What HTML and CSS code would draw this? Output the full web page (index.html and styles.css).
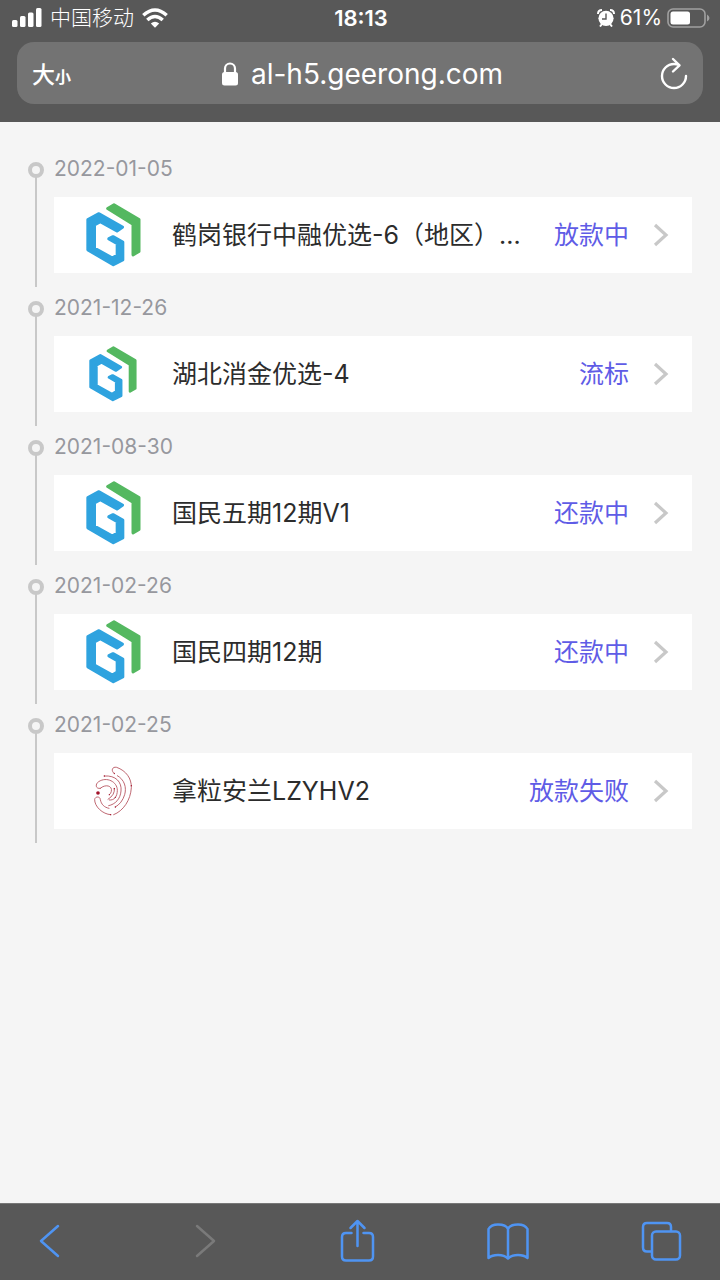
FILE: index.html
```html
<!DOCTYPE html>
<html lang="zh-CN">
<head>
<meta charset="utf-8">
<meta name="viewport" content="width=device-width, initial-scale=1">
<title>al-h5.geerong.com</title>
<link rel="stylesheet" href="styles.css">
</head>
<body>
<svg class="defs" width="0" height="0" aria-hidden="true">
  <symbol id="logo-g" viewBox="257 189 165 191">
    <path fill="#2fa3df" stroke="#2fa3df" stroke-width="10" stroke-linejoin="round" d="M296 221 L366 261 L350 272 L300 244 L282 254 L282 324 L336 354 L351 345 L351 310 L326 296 L338 290 L367 306 L367 359 L339 373 L263 329 L263 239 Z"/>
    <path fill="#54b860" stroke="#54b860" stroke-width="9" stroke-linejoin="round" d="M322 205 L341 194 L416 238 L416 334 L398 344 L398 252 Z"/>
  </symbol>
  <symbol id="chevron" viewBox="0 0 16 26">
    <path d="M2 3 L13 13 L2 23" fill="none" stroke="#c8c8c8" stroke-width="3.2"/>
  </symbol>
</svg>

<header class="browser-top">
  <div class="status">
    <div class="status-side">
      <svg width="30" height="20" viewBox="0 0 30 20" fill="#fff" aria-hidden="true"><rect y="12" width="5.500" height="7" rx="1.500"/><rect x="8" y="8" width="5.500" height="11" rx="1.500"/><rect x="16" y="4.500" width="5.500" height="14.500" rx="1.500"/><rect x="24" y="0" width="5.500" height="19" rx="1.500"/></svg>
      <span class="carrier">中国移动</span>
      <svg width="26" height="20" viewBox="0 0 26 20" aria-hidden="true"><g fill="none" stroke="#fff" stroke-width="3.500"><path d="M1.300 7.300 Q13 -3.300 24.700 7.300"/><path d="M5.300 12 Q13 5 20.700 12"/></g><path fill="#fff" d="M8.800 15.500 Q13 12 17.200 15.500 L13 19.700Z"/></svg>
    </div>
    <time class="clock">18:13</time>
    <div class="status-side status-right">
      <svg width="18" height="18" viewBox="0 0 18 18" aria-hidden="true"><circle cx="9" cy="9.300" r="7.600" fill="#fff"/><path d="M1 5 Q1 1 5 1 M13 1 Q17 1 17 5 M3 17.500 L5 15 M15 17.500 L13 15" fill="none" stroke="#fff" stroke-width="2"/><path d="M9 4.500 V10 H5" fill="none" stroke="#585858" stroke-width="1.400"/></svg>
      <span class="percent">61%</span>
      <svg width="43" height="20" viewBox="0 0 43 20" aria-hidden="true"><rect x="1" y="1" width="37" height="18" rx="5" fill="none" stroke="#a0a0a0" stroke-width="1.600"/><rect x="3.500" y="3.500" width="19.500" height="13" rx="2.500" fill="#fff"/><path d="M40 6.500 Q42.500 8 42.500 10 Q42.500 12 40 13.500Z" fill="#a0a0a0"/></svg>
    </div>
  </div>
  <div class="address">
    <button class="text-size" type="button">大<small>小</small></button>
    <div class="url">
      <svg width="18" height="24" viewBox="0 0 18 24" aria-hidden="true"><rect x="1" y="10" width="16" height="13.500" rx="2.500" fill="#fff"/><path d="M4 11 V6.500 a5 5 0 0 1 10 0 V11" fill="none" stroke="#fff" stroke-width="2.200"/></svg>
      <span>al-h5.geerong.com</span>
    </div>
    <button class="reload" type="button" aria-label="重新加载">
      <svg width="28" height="34" viewBox="0 0 28 34" fill="none" stroke="#fff" stroke-width="2.400" stroke-linecap="round" stroke-linejoin="round" aria-hidden="true"><path d="M26 20 A12 12 0 1 1 14 8 Q17 8 19 9"/><path d="M13 3 L19.500 9.300 L13 15.500"/></svg>
    </button>
  </div>
</header>

<main class="page">
  <ol class="timeline">
    <li class="entry">
      <time class="date">2022-01-05</time>
      <a class="card" href="#"><span class="logo"><svg width="55" height="64" aria-hidden="true"><use href="#logo-g"/></svg></span><span class="name">鹤岗银行中融优选-6（地区）...</span><span class="state">放款中</span><svg class="arrow" aria-hidden="true"><use href="#chevron"/></svg></a>
    </li>
    <li class="entry">
      <time class="date">2021-12-26</time>
      <a class="card" href="#"><span class="logo"><svg width="48" height="56" aria-hidden="true"><use href="#logo-g"/></svg></span><span class="name">湖北消金优选-4</span><span class="state">流标</span><svg class="arrow" aria-hidden="true"><use href="#chevron"/></svg></a>
    </li>
    <li class="entry">
      <time class="date">2021-08-30</time>
      <a class="card" href="#"><span class="logo"><svg width="55" height="64" aria-hidden="true"><use href="#logo-g"/></svg></span><span class="name">国民五期12期V1</span><span class="state">还款中</span><svg class="arrow" aria-hidden="true"><use href="#chevron"/></svg></a>
    </li>
    <li class="entry">
      <time class="date">2021-02-26</time>
      <a class="card" href="#"><span class="logo"><svg width="55" height="64" aria-hidden="true"><use href="#logo-g"/></svg></span><span class="name">国民四期12期</span><span class="state">还款中</span><svg class="arrow" aria-hidden="true"><use href="#chevron"/></svg></a>
    </li>
    <li class="entry">
      <time class="date">2021-02-25</time>
      <a class="card" href="#"><span class="logo"><svg width="70" height="70" viewBox="-6 3 210 210" aria-hidden="true">
        <g fill="none" stroke="#b5505c" stroke-width="2.600" stroke-linecap="round"><path d="M103 56 C92 48 96 34 110 37 C138 47 155 70 154 98 C152 135 130 168 101 179"/><path d="M73 63 C108 60 126 82 123 108 C121 132 106 148 86 152"/><path d="M61 100 C46 103 45 87 56 80 C80 64 112 80 112 106 C112 124 103 137 88 135"/><path d="M61 100 C76 86 98 92 94 109 Q93 116 88 119"/><path d="M112 62 C134 74 140 98 134 119 Q126 145 106 156"/><path d="M103 100 Q106 119 84 133"/><path d="M92 179 C68 178 43 154 44 133 C46 123 61 124 61 134 C64 148 72 157 87 160"/></g>
        <g fill="#a3132b"><circle cx="54" cy="114" r="5.500"/><circle cx="73" cy="63" r="2"/><circle cx="103" cy="55" r="2"/><circle cx="103" cy="101" r="2"/><circle cx="88" cy="119" r="2"/><circle cx="106" cy="156" r="2"/><circle cx="92" cy="179" r="2"/><circle cx="154" cy="92" r="2"/><circle cx="106" cy="127" r="2"/></g>
      </svg></span><span class="name">拿粒安兰LZYHV2</span><span class="state">放款失败</span><svg class="arrow" aria-hidden="true"><use href="#chevron"/></svg></a>
    </li>
  </ol>
</main>

<nav class="toolbar" aria-label="浏览器工具栏">
  <button type="button" aria-label="后退"><svg viewBox="0 0 44 44"><path d="M30 8 L13 23 L30 38"/></svg></button>
  <button type="button" aria-label="前进" disabled><svg viewBox="0 0 44 44"><path d="M16 8 L33 23 L16 38"/></svg></button>
  <button type="button" aria-label="分享"><svg viewBox="0 0 44 44"><path d="M17.500 15 H12 Q8 15 8 19 V38.500 Q8 42.500 12 42.500 H35 Q39 42.500 39 38.500 V19 Q39 15 35 15 H29.500 M23.500 28 V3.500 M16.500 10 L23.500 3 L30.500 10"/></svg></button>
  <button type="button" aria-label="书签"><svg viewBox="0 0 44 44"><path d="M22 11 Q20 6.500 12 6.500 Q5 6.500 2.500 11 V40 Q6 37 12 37 Q18.500 37 22 40.500 Q25.500 37 32 37 Q38 37 41.500 40 V11 Q39 6.500 32 6.500 Q24 6.500 22 11 V40"/></svg></button>
  <button type="button" aria-label="标签页"><svg viewBox="0 0 44 44"><path d="M12 33.500 H8 Q4 33.500 4 29.500 V9 Q4 5 8 5 H28 Q32 5 32 9 V13"/><rect x="13" y="13.500" width="28" height="28" rx="4"/></svg></button>
</nav>
</body>
</html>
```
FILE: styles.css
```css
*,
*::before,
*::after {
  box-sizing: border-box;
}

body {
  margin: 0;
  min-height: 100vh;
  display: flex;
  flex-direction: column;
  background: #f5f5f5;
  color: #2c2c2c;
  font-family: Inter, "Noto Sans CJK SC", sans-serif;
}

button {
  padding: 0;
  border: 0;
  background: none;
  color: inherit;
  font: inherit;
}

svg {
  display: block;
  flex: none;
}

.defs {
  position: absolute;
}

.browser-top {
  height: 122px;
  padding: 0 17px;
  background: #585858;
  color: #fff;
}

.status {
  display: grid;
  grid-template-columns: 1fr auto 1fr;
  align-items: center;
  height: 36px;
  margin: 0 -7px 6px -5px;
  font-size: 21px;
  line-height: 24px;
}

.status-side {
  display: flex;
  align-items: center;
  gap: 8px;
}

.carrier {
  font-weight: 300;
}

.status-right {
  justify-content: flex-end;
  gap: 5px;
}

.clock {
  font-size: 22px;
  font-weight: 600;
}

.address {
  display: grid;
  grid-template-columns: 60px 1fr 60px;
  align-items: center;
  height: 62px;
  padding: 0 15px;
  border-radius: 17px;
  background: #737373;
}

.text-size {
  text-align: left;
  font-size: 23px;
  font-weight: 500;
}

.text-size small {
  font-size: 16px;
  font-weight: 700;
}

.url {
  display: flex;
  align-items: center;
  justify-content: center;
  gap: 12px;
  padding: 2px 0 0 4px;
  font-size: 28px;
  line-height: 34px;
}

.reload {
  justify-self: end;
}

.page {
  flex: 1;
  padding: 34px 28px 0;
}

.timeline {
  margin: 0;
  padding: 0;
  list-style: none;
}

.entry {
  position: relative;
  padding: 0 0 22px 26px;
}

.entry::before {
  content: "";
  position: absolute;
  top: 21px;
  bottom: 8px;
  left: 7px;
  width: 2px;
  background: #c8c8c8;
}

.entry::after {
  content: "";
  position: absolute;
  top: 6px;
  left: 0;
  width: 16px;
  height: 16px;
  border: 4px solid #c8c8c8;
  border-radius: 50%;
}

.date {
  display: block;
  margin-bottom: 15px;
  color: #97989e;
  font-size: 21px;
  line-height: 26px;
}

.card {
  display: flex;
  align-items: center;
  height: 76px;
  padding-right: 23px;
  background: #fff;
  color: inherit;
  font-size: 25px;
  line-height: 36px;
  text-decoration: none;
}

.logo {
  display: flex;
  flex: none;
  justify-content: center;
  width: 118px;
}

.name {
  flex: 1;
  min-width: 0;
  margin-right: 24px;
  overflow: hidden;
  text-overflow: ellipsis;
  white-space: nowrap;
}

.state {
  flex: none;
  color: #5f5ce6;
}

.arrow {
  width: 16px;
  height: 26px;
  margin-left: 24px;
}

.toolbar {
  display: flex;
  justify-content: space-between;
  height: 77px;
  padding: 14px 37px 0 28px;
  border-top: 1px solid #777;
  background: #585858;
}

.toolbar button {
  width: 44px;
  height: 44px;
}

.toolbar svg {
  fill: none;
  stroke: #4f94f2;
  stroke-width: 2.5;
  stroke-linecap: round;
  stroke-linejoin: round;
}

.toolbar button:disabled svg {
  stroke: #7a7a7a;
}
```
